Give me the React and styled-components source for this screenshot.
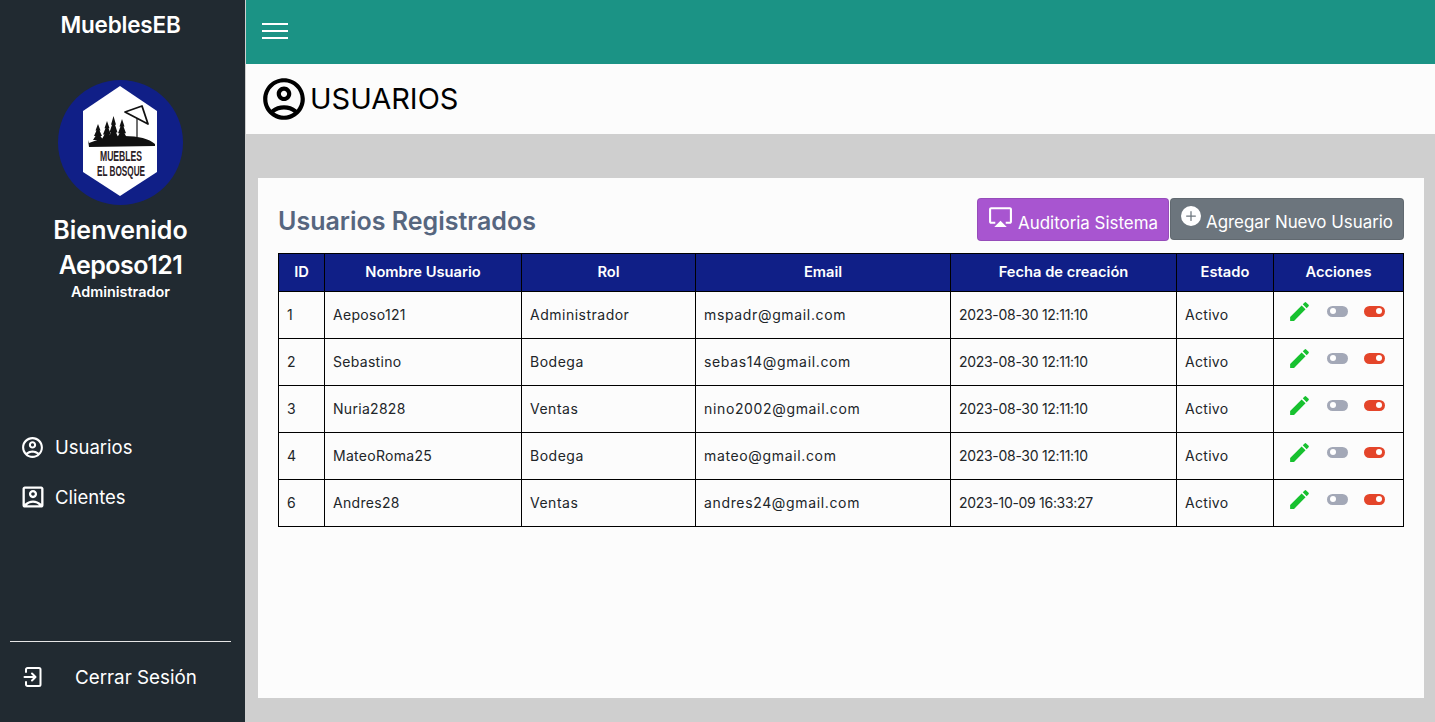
import React from 'react';
import styled, { createGlobalStyle } from 'styled-components';
import { MdOutlineAccountCircle, MdOutlineAccountBox, MdEdit, MdOutlineAirplay } from 'react-icons/md';
import { BsPlusCircleFill } from 'react-icons/bs';

const Global = createGlobalStyle`
  html, body { margin: 0; padding: 0; }
  body { font-family: Inter, "Open Sans", "Liberation Sans", sans-serif; background: #cfcfcf; }
`;

const Layout = styled.div`
  display: grid;
  grid-template-columns: 245px 1fr;
  height: 722px;
  overflow: hidden;
`;

const Sidebar = styled.aside`
  background: #212a31;
  color: #fff;
  display: flex;
  flex-direction: column;
  align-items: center;
  padding: 12px 4px 0 0;
`;

const Brand = styled.div`
  font-size: 22.500px;
  font-weight: 600;
  line-height: 26px;
  letter-spacing: -0.2px;
`;

const Avatar = styled.svg`
  width: 126px;
  height: 126px;
  margin-top: 42px;
  display: block;
`;

const Welcome = styled.div`
  margin-top: 7px;
  font-size: 25px;
  font-weight: 600;
  line-height: 35px;
  text-align: center;
`;

const UserName = styled.div`
  letter-spacing: -0.5px;
`;

const Role = styled.div`
  margin-top: 1px;
  font-size: 14.400px;
  font-weight: 600;
  line-height: 16px;
`;

const Nav = styled.nav`
  margin-top: 132px;
  width: 100%;
  display: flex;
  flex-direction: column;
  gap: 20px;
  padding-left: 21px;
  box-sizing: border-box;
`;

const NavItem = styled.a`
  display: flex;
  align-items: center;
  gap: 11px;
  font-size: 18.500px;
  line-height: 30px;
`;

const NavIcon = styled.span`
  width: 23px;
  height: 24px;
  display: flex;
  align-items: center;
  justify-content: center;
  svg { flex: none; }
`;

const SideFoot = styled.div`
  margin-top: auto;
  width: 221px;
  border-top: 1px solid #e6e6e6;
  height: 81px;
  display: flex;
  align-items: center;
  gap: 32px;
  padding: 0 0 10px 13px;
  box-sizing: border-box;
  font-size: 18.800px;
`;

const Main = styled.main`
  display: flex;
  flex-direction: column;
  margin-left: 1px;
  min-width: 0;
`;

const TopBar = styled.header`
  height: 64px;
  background: #1b9385;
  display: flex;
  align-items: center;
  padding: 0 0 2px 16px;
  box-sizing: border-box;
`;

const Burger = styled.div`
  width: 26px;
  display: flex;
  flex-direction: column;
  gap: 5px;
  span { display: block; height: 2px; background: #fff; }
`;

const TitleBar = styled.div`
  height: 70px;
  background: #fcfcfc;
  display: flex;
  align-items: center;
  padding-left: 15px;
  color: #000;
  svg { margin: 0 -1px 0 -2px; flex: none; }
`;

const TitleText = styled.h1`
  margin: 0 0 2px 2px;
  font-size: 29px;
  font-weight: 400;
`;

const Content = styled.div`
  flex: 1;
  display: flex;
  padding: 44px 12px 24px 12px;
  min-height: 0;
`;

const Card = styled.section`
  flex: 1;
  background: #fcfcfc;
  padding: 20px 20px 0;
`;

const CardHead = styled.div`
  display: flex;
  align-items: center;
  justify-content: space-between;
  height: 43px;
  margin-bottom: 12px;
`;

const CardTitle = styled.h2`
  margin: 2px 0 0;
  font-size: 25px;
  font-weight: 600;
  color: #56667f;
`;

const Actions = styled.div`
  display: flex;
  align-items: flex-start;
  gap: 1px;
`;

const Button = styled.button`
  height: ${p => p.$h}px;
  width: ${p => p.$w}px;
  background: ${p => p.$bg};
  color: #fff;
  border: 1px solid rgba(0, 0, 0, 0.1);
  border-radius: 4px;
  font-family: inherit;
  font-size: 16.900px;
  padding: 6px 0 0 0;
  display: flex;
  align-items: center;
  justify-content: center;
  gap: 5px;
  svg { margin-top: -12px; flex: none; }
`;

const Table = styled.table`
  width: 1125px;
  table-layout: fixed;
  border-collapse: collapse;
  font-size: 14px;
  color: #212529;
`;

const Th = styled.th`
  background: #101f87;
  color: #fff;
  border: 1px solid #000;
  height: 35px;
  padding: 0 0 2px;
  font-size: 14.700px;
  font-weight: 600;
  text-align: center;
`;

const Td = styled.td`
  border: 1px solid #000;
  height: 44px;
  padding: 0 8px 2px;
  white-space: nowrap;
  letter-spacing: ${p => p.$track || 0}px;
`;

const RowIcons = styled.div`
  display: flex;
  align-items: center;
  gap: 16px;
  padding: 0 0 6px 5px;
  color: #17c12f;
  svg { margin-right: -1px; flex: none; }
`;

const Toggle = styled.span`
  position: relative;
  display: inline-block;
  width: 21px;
  height: 11px;
  border-radius: 6px;
  background: ${p => (p.$on ? '#e4452a' : '#a3a8b7')};
  &::after {
    content: '';
    position: absolute;
    top: 2.500px;
    left: ${p => (p.$on ? '12px' : '3px')};
    width: 6px;
    height: 6px;
    border-radius: 50%;
    background: #fff;
  }
`;

const widths = [46, 197, 174, 255, 226, 97, 130];
const heads = ['ID', 'Nombre Usuario', 'Rol', 'Email', 'Fecha de creación', 'Estado', 'Acciones'];
// letter spacing per column, the digits and letters don't widen the same way
const tracks = [0, 0.3, 0.5, 0.65, -0.3];
const users = [
  [1, 'Aeposo121', 'Administrador', 'mspadr@gmail.com', '2023-08-30 12:11:10'],
  [2, 'Sebastino', 'Bodega', 'sebas14@gmail.com', '2023-08-30 12:11:10'],
  [3, 'Nuria2828', 'Ventas', 'nino2002@gmail.com', '2023-08-30 12:11:10'],
  [4, 'MateoRoma25', 'Bodega', 'mateo@gmail.com', '2023-08-30 12:11:10'],
  [6, 'Andres28', 'Ventas', 'andres24@gmail.com', '2023-10-09 16:33:27'],
];

const Tree = ({ x, top, base }) => {
  const h = base - top;
  return (
    <path d={`M${x} ${top} L${x + 2.5} ${top + h * 0.4} L${x + 1.5} ${top + h * 0.4} L${x + 4} ${top + h * 0.75} L${x + 2.5} ${top + h * 0.75} L${x + 5} ${base} L${x - 5} ${base} L${x - 2.5} ${top + h * 0.75} L${x - 4} ${top + h * 0.75} L${x - 1.5} ${top + h * 0.4} L${x - 2.5} ${top + h * 0.4} Z`} />
  );
};

const Logo = () => (
  <Avatar viewBox="0 0 126 126">
    <circle cx="62.500" cy="62.500" r="62.500" fill="#101f87" />
    <polygon points="62,6 99,31 99,92 62,116 25,92 25,31" fill="#fff" />
    <polygon points="67,32 84,26 90,44" fill="#fff" stroke="#111" strokeWidth="1.800" strokeLinejoin="round" />
    <line x1="79" y1="38" x2="79" y2="57" stroke="#111" strokeWidth="1.200" />
    <g fill="#111">
      <Tree x={40} top={44} base={60} />
      <Tree x={49} top={41} base={59} />
      <Tree x={55.500} top={36} base={58} />
      <Tree x={64} top={39} base={58} />
      <path d="M30 60 L31 63 Q48 56 66 56 Q88 56 97 64 L97 66 L31 67 Z" />
    </g>
    <text x="63" y="81" textAnchor="middle" fontFamily="'Liberation Sans',sans-serif" fontWeight="700" fontSize="14" textLength="42" lengthAdjust="spacingAndGlyphs" fill="#2a2025">MUEBLES</text>
    <text x="63" y="96" textAnchor="middle" fontFamily="'Liberation Sans',sans-serif" fontWeight="700" fontSize="14" textLength="48" lengthAdjust="spacingAndGlyphs" fill="#2a2025">EL BOSQUE</text>
  </Avatar>
);

const ExitIcon = () => (
  <svg width="20" height="22" viewBox="0 0 20 22" fill="none" stroke="#fff" strokeWidth="2" strokeLinecap="round" strokeLinejoin="round" style={{ flex: 'none' }}>
    <path d="M3 6V3.500C3 2.700 3.700 2 4.500 2H16C16.800 2 17.500 2.700 17.500 3.500V18.500C17.500 19.300 16.800 20 16 20H4.500C3.700 20 3 19.300 3 18.500V16" />
    <path d="M1.500 11H12M9 7.500L12.500 11L9 14.500" />
  </svg>
);

export default function App() {
  return (
    <Layout>
      <Global />
      <Sidebar>
        <Brand>MueblesEB</Brand>
        <Logo />
        <Welcome>Bienvenido<UserName>Aeposo121</UserName></Welcome>
        <Role>Administrador</Role>
        <Nav>
          <NavItem><NavIcon><MdOutlineAccountCircle size={25} /></NavIcon>Usuarios</NavItem>
          <NavItem><NavIcon><MdOutlineAccountBox size={28} /></NavIcon>Clientes</NavItem>
        </Nav>
        <SideFoot><ExitIcon />Cerrar Sesión</SideFoot>
      </Sidebar>
      <Main>
        <TopBar><Burger><span /><span /><span /></Burger></TopBar>
        <TitleBar><MdOutlineAccountCircle size={50} /><TitleText>USUARIOS</TitleText></TitleBar>
        <Content>
          <Card>
            <CardHead>
              <CardTitle>Usuarios Registrados</CardTitle>
              <Actions>
                <Button $bg="#a855d0" $w={192} $h={43}><MdOutlineAirplay size={25} />Auditoria Sistema</Button>
                <Button $bg="#6c757d" $w={234} $h={42}><BsPlusCircleFill size={20} />Agregar Nuevo Usuario</Button>
              </Actions>
            </CardHead>
            <Table>
              <colgroup>
                {widths.map((w, i) => <col key={i} width={w} />)}
              </colgroup>
              <thead>
                <tr>{heads.map(h => <Th key={h}>{h}</Th>)}</tr>
              </thead>
              <tbody>
                {users.map(u => (
                  <tr key={u[0]}>
                    {u.map((c, i) => <Td key={i} $track={tracks[i]}>{c}</Td>)}
                    <Td $track={0.3}>Activo</Td>
                    <Td>
                      <RowIcons>
                        <MdEdit size={25} />
                        <Toggle />
                        <Toggle $on />
                      </RowIcons>
                    </Td>
                  </tr>
                ))}
              </tbody>
            </Table>
          </Card>
        </Content>
      </Main>
    </Layout>
  );
}
